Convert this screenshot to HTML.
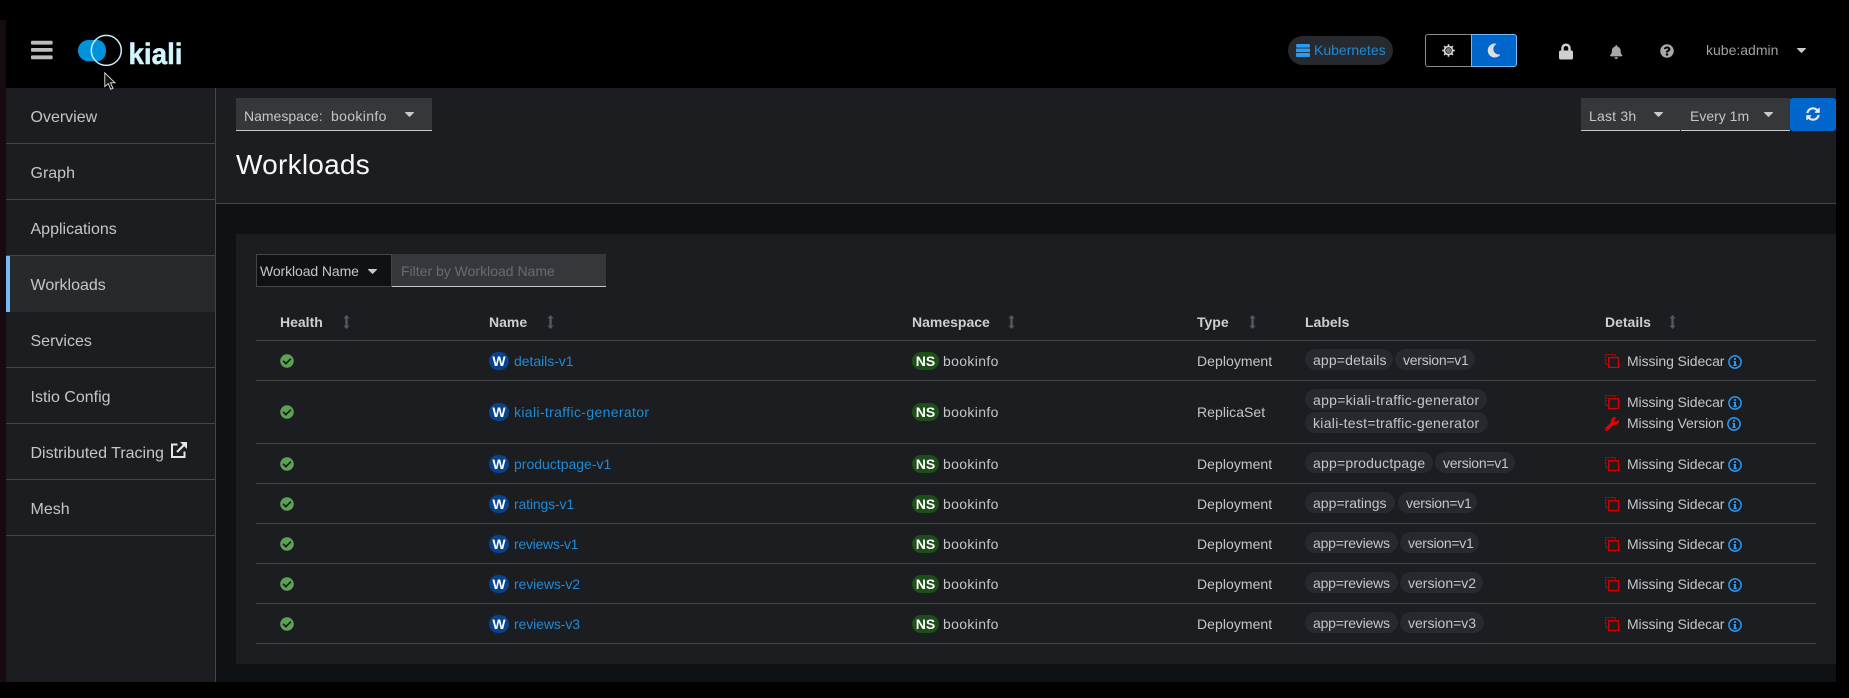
<!DOCTYPE html>
<html><head><meta charset="utf-8"><title>Workloads</title>
<style>
html,body{margin:0;padding:0;background:#000;}
body{position:relative;width:1849px;height:698px;overflow:hidden;font-family:"Liberation Sans",sans-serif;font-size:14px;color:#c6c6c6;}
.a{position:absolute;display:block;}
.t{position:absolute;line-height:20px;white-space:nowrap;}
.nav{position:absolute;left:30.500px;line-height:22px;font-size:16px;color:#c6c6c6;white-space:nowrap;}
.ln{position:absolute;left:6px;width:209px;height:1px;background:#444548;}
.hl{position:absolute;left:256px;width:1560px;height:1px;background:#444548;}
.th{position:absolute;top:312px;line-height:20px;font-weight:bold;color:#cfcfcf;}
.row{position:absolute;left:0;width:1849px;height:20px;}
.lk{color:#1f8ad6;left:514px;}
.b{position:absolute;top:1px;height:18px;line-height:18px;text-align:center;border-radius:9px;font-weight:bold;color:#fff;font-size:14px;}
.w{left:489px;width:20px;background:#06438a;}
.ns{left:912px;width:27px;background:#1e4f18;}
.bi{left:943px;letter-spacing:.35px;color:#c6c6c6;}
.ty{left:1197px;letter-spacing:.05px;color:#c6c6c6;}
.p{position:absolute;left:1305px;top:-2px;height:21px;line-height:23px;border-radius:11px;background:#26292d;color:#c6c6c6;white-space:nowrap;padding-left:8px;box-sizing:border-box;}
.dt{left:1627px;letter-spacing:-.1px;color:#c6c6c6;}
.sel{position:absolute;background:#36373b;border-bottom:1px solid #c7c7c7;box-sizing:border-box;}
svg{position:absolute;display:block;overflow:visible;}
</style></head><body>
<svg width="0" height="0" style="position:absolute">
<defs>
<symbol id="chk" viewBox="0 0 512 512"><path fill="#5ba352" d="M504 256c0 136.967-111.033 248-248 248S8 392.967 8 256 119.033 8 256 8s248 111.033 248 248zM227.314 387.314l184-184c6.248-6.248 6.248-16.379 0-22.627l-22.627-22.627c-6.248-6.249-16.379-6.249-22.628 0L216 308.118l-70.059-70.059c-6.248-6.248-16.379-6.248-22.628 0l-22.627 22.627c-6.248 6.248-6.248 16.379 0 22.627l104 104c6.249 6.249 16.379 6.249 22.628.001z"/></symbol>
<symbol id="sort" viewBox="0 0 7 14"><path fill="#55585c" d="M3.500 0 6.600 3.400H4.700V10.600H6.600L3.500 14 .4 10.600H2.300V3.400H.4Z"/></symbol>
<symbol id="car" viewBox="0 0 9 5"><path fill="#c9c9c9" d="M.6 0H8.400C8.900 0 9.100.5 8.800.9L4.900 4.700C4.700 4.900 4.300 4.900 4.100 4.700L.2.9C-.1.5.1 0 .6 0Z"/></symbol>
<symbol id="sc" viewBox="0 0 14 14"><path fill="none" stroke="#d00000" stroke-width="1.100" stroke-dasharray="2 1" d="M3 10.500H.6V.6H9.500L11 2.500"/><rect x="3.700" y="3.700" width="9.800" height="9.800" fill="none" stroke="#d80000" stroke-width="1.300"/></symbol>
<symbol id="inf" viewBox="0 0 14 14"><circle cx="7" cy="7" r="6.100" fill="none" stroke="#2b9af3" stroke-width="1.500"/><circle cx="7" cy="4" r="1.100" fill="#2b9af3"/><path fill="#2b9af3" d="M5.500 6H8V9.600H8.800V11H5.300V9.600H6.100V7.300H5.500Z"/></symbol>
<symbol id="wr" viewBox="0 0 512 512"><path fill="#ee0000" d="M507.730 109.100c-2.240-9.030-13.540-12.090-20.120-5.510l-74.360 74.360-67.880-11.310-11.310-67.880 74.360-74.360c6.620-6.620 3.430-17.900-5.660-20.160-47.380-11.740-99.550.91-136.580 37.930-39.640 39.640-50.550 97.100-34.050 147.200L18.740 402.760c-24.990 24.990-24.990 65.510 0 90.500 24.990 24.990 65.510 24.990 90.500 0l213.210-213.210c50.120 16.710 107.470 5.680 147.370-34.220 37.070-37.070 49.700-89.320 37.910-136.730zM64 472c-13.250 0-24-10.750-24-24 0-13.260 10.750-24 24-24s24 10.740 24 24c0 13.250-10.750 24-24 24z"/></symbol>
</defs></svg>

<!-- frame -->
<div class="a" style="left:0;top:20px;width:6px;height:662px;background:#170b12"></div>
<div class="a" style="left:6px;top:88px;width:209px;height:594px;background:#1b1d21"></div>
<div class="a" style="left:215px;top:88px;width:1px;height:594px;background:#444548"></div>
<div class="a" style="left:216px;top:88px;width:1620px;height:115px;background:#1b1d21"></div>
<div class="a" style="left:216px;top:203px;width:1620px;height:1px;background:#444548"></div>
<div class="a" style="left:216px;top:204px;width:1620px;height:478px;background:#0f1214"></div>
<div class="a" style="left:236px;top:234px;width:1600px;height:430px;background:#1b1d21"></div>

<!-- masthead -->
<svg style="left:31px;top:40px" width="22" height="20" viewBox="0 0 22 20"><g fill="#bcbcbc"><rect x="0" y=".8" width="21.600" height="3.800" rx="1"/><rect x="0" y="8" width="21.600" height="3.800" rx="1"/><rect x="0" y="15.400" width="21.600" height="3.800" rx="1"/></g></svg>
<svg style="left:76px;top:33px" width="110" height="36" viewBox="0 0 110 36">
<path fill="#0093dd" d="M12.500 7H22C27 7.800 30 12 30 17.600S27 27.400 22 28.300H12.500C6.600 28.300 2 23.500 2 17.600S6.600 7 12.500 7Z"/>
<circle cx="30.300" cy="17.400" r="15" fill="none" stroke="#c9eff5" stroke-width="1.500"/>
<text x="52.500" y="31" font-family="Liberation Sans" font-weight="bold" font-size="30" fill="#d2f5fc" stroke="#d2f5fc" stroke-width=".5" textLength="54" lengthAdjust="spacingAndGlyphs">kiali</text>
</svg>
<svg style="left:104px;top:72px" width="14" height="20" viewBox="0 0 14 20"><path fill="#151515" stroke="#e8e8e8" stroke-width=".9" d="M.8.8V14.600L4.200 11.600 6.700 17.300 9 16.300 6.500 10.800H11Z"/></svg>

<div class="a" style="left:1288px;top:36px;width:105px;height:29px;border-radius:15px;background:#26292d"></div>
<svg style="left:1296px;top:44px" width="14" height="13" viewBox="0 0 14 13"><g fill="#2b9af3"><rect width="14" height="3.600" rx="1.400"/><rect y="4.500" width="14" height="3.600" rx=".4"/><rect y="9" width="14" height="4" rx="1"/></g></svg>
<div class="t" style="left:1314px;top:40px;color:#1f8ad6;">Kubernetes</div>

<div class="a" style="left:1425px;top:34px;width:47px;height:33px;box-sizing:border-box;border:1px solid #8a8d90;border-right:0;border-radius:3px 0 0 3px;background:#000"></div>
<div class="a" style="left:1471px;top:34px;width:46px;height:33px;box-sizing:border-box;border:1px solid #73bcf7;border-radius:0 3px 3px 0;background:#0066cc"></div>
<svg style="left:1441.500px;top:43.500px" width="13" height="13" viewBox="0 0 14 14"><circle cx="7" cy="7" r="2.800" fill="#777"/><g fill="none" stroke="#dcdcdc"><circle cx="7" cy="7" r="4.300" stroke-width="1.700"/><path stroke-width="1.800" d="M7 .3V2.500M7 11.500V13.700M.3 7H2.500M11.500 7H13.700M2.300 2.300 3.800 3.800M10.200 10.200 11.700 11.700M11.700 2.300 10.200 3.800M3.800 10.200 2.300 11.700"/></g></svg>
<svg style="left:1487px;top:42.500px" width="14" height="15" viewBox="0 0 512 512"><path fill="#dedede" d="M283.211 512c78.962 0 151.079-35.925 198.857-94.792 7.068-8.708-.639-21.430-11.562-19.350-124.203 23.654-238.262-71.576-238.262-196.954 0-72.222 38.662-138.635 101.498-174.394 9.686-5.512 7.250-20.197-3.756-22.230A258.156 258.156 0 0 0 283.211 0c-141.309 0-256 114.511-256 256 0 141.309 114.511 256 256 256z"/></svg>
<svg style="left:1559px;top:43px" width="14" height="17" viewBox="0 0 448 512"><path fill="#cfcfcf" d="M400 224h-24v-72C376 68.200 307.800 0 224 0S72 68.200 72 152v72H48c-26.500 0-48 21.500-48 48v192c0 26.500 21.500 48 48 48h352c26.500 0 48-21.500 48-48V272c0-26.500-21.500-48-48-48zm-104 0H152v-72c0-39.700 32.300-72 72-72s72 32.300 72 72v72z"/></svg>
<svg style="left:1610px;top:45px" width="12.500" height="14" viewBox="0 0 448 512"><path fill="#a9a9a9" d="M224 512c35.320 0 63.970-28.650 63.970-64H160.030c0 35.350 28.650 64 63.970 64zm215.390-149.710c-19.320-20.760-55.470-51.990-55.470-154.290 0-77.700-54.480-139.900-127.940-155.160V32c0-17.670-14.320-32-31.980-32s-31.980 14.330-31.980 32v20.840C118.560 68.100 64.080 130.300 64.080 208c0 102.300-36.150 133.530-55.470 154.290-6 6.450-8.660 14.160-8.610 21.710.11 16.400 12.980 32 32.100 32h383.800c19.120 0 32-15.600 32.100-32 .05-7.550-2.610-15.270-8.610-21.710z"/></svg>
<svg style="left:1659.500px;top:43.500px" width="14" height="14" viewBox="0 0 512 512"><path fill="#a9a9a9" d="M504 256c0 136.997-111.043 248-248 248S8 392.997 8 256C8 119.083 119.043 8 256 8s248 111.083 248 248zM262.655 90c-54.497 0-89.255 22.957-116.549 63.758-3.536 5.286-2.353 12.415 2.715 16.258l34.699 26.310c5.205 3.947 12.621 3.008 16.665-2.122 17.864-22.658 30.113-35.797 57.303-35.797 20.429 0 45.698 13.148 45.698 32.958 0 14.976-12.363 22.667-32.534 33.976C247.128 238.528 216 254.941 216 296v4c0 6.627 5.373 12 12 12h56c6.627 0 12-5.373 12-12v-1.333c0-28.462 83.186-29.647 83.186-106.667 0-58.002-60.165-102-116.531-102zM256 338c-25.365 0-46 20.635-46 46 0 25.364 20.635 46 46 46s46-20.636 46-46c0-25.365-20.635-46-46-46z"/></svg>
<div class="t" style="left:1706px;top:40px;color:#a0a0a0;">kube:admin</div>
<svg style="left:1797px;top:48px" width="9" height="5"><use href="#car"/></svg>

<!-- sidebar -->
<div class="a" style="left:6px;top:255px;width:209px;height:57px;background:#27292d"></div>
<div class="a" style="left:6px;top:255px;width:4px;height:57px;background:#73bcf7"></div>
<div class="ln" style="top:143px"></div><div class="ln" style="top:199px"></div><div class="ln" style="top:255px"></div>
<div class="ln" style="top:367px"></div><div class="ln" style="top:423px"></div><div class="ln" style="top:479px"></div><div class="ln" style="top:535px"></div>
<div class="nav" style="top:107px">Overview</div>
<div class="nav" style="top:163px">Graph</div>
<div class="nav" style="top:219px">Applications</div>
<div class="nav" style="top:275px">Workloads</div>
<div class="nav" style="top:331px">Services</div>
<div class="nav" style="top:387px">Istio Config</div>
<div class="nav" style="top:443px">Distributed Tracing</div>
<div class="nav" style="top:499px">Mesh</div>
<svg style="left:171px;top:442px" width="16" height="16" viewBox="0 0 16 16"><path fill="none" stroke="#e6e6e6" stroke-width="2" d="M6.500 2.500H1V15H13.500V9.500"/><path fill="none" stroke="#e6e6e6" stroke-width="2.200" d="M6 10 13.500 2.500"/><path fill="#e6e6e6" d="M9 0H16V7Z"/></svg>

<!-- page head -->
<div class="sel" style="left:236px;top:98px;width:196px;height:33px"></div>
<div class="t" style="left:244px;top:106px;color:#c6c6c6;">Namespace:</div>
<div class="t" style="left:331px;top:106px;color:#c6c6c6;letter-spacing:.35px;">bookinfo</div>
<svg style="left:404.500px;top:112px" width="9" height="5"><use href="#car"/></svg>
<div class="t" style="left:236px;top:148px;font-size:28px;line-height:34px;color:#f8f8f8;letter-spacing:.25px;">Workloads</div>

<div class="sel" style="left:1581px;top:98px;width:99px;height:33px"></div>
<div class="sel" style="left:1681px;top:98px;width:109px;height:33px"></div>
<div class="a" style="left:1680px;top:98px;width:1px;height:32px;background:#36373b"></div>
<div class="t" style="left:1589px;top:106px;color:#c6c6c6;letter-spacing:.2px;">Last 3h</div>
<svg style="left:1654px;top:112px" width="9" height="5"><use href="#car"/></svg>
<div class="t" style="left:1690px;top:106px;color:#c6c6c6;">Every 1m</div>
<svg style="left:1763.500px;top:112px" width="9" height="5"><use href="#car"/></svg>
<div class="a" style="left:1790px;top:98px;width:46px;height:33px;background:#0066cc;border-radius:3px"></div>
<svg style="left:1806px;top:107px" width="14" height="14" viewBox="0 0 512 512"><path fill="#e8e8e8" d="M370.720 133.280C339.458 104.008 298.888 87.962 255.848 88c-77.458.068-144.328 53.178-162.791 126.850-1.344 5.363-6.122 9.150-11.651 9.150H24.103c-7.498 0-13.194-6.807-11.807-14.176C33.933 94.924 134.813 8 256 8c66.448 0 126.791 26.136 171.315 68.685L463.030 40.970C478.149 25.851 504 36.559 504 57.941V192c0 13.255-10.745 24-24 24H345.941c-21.382 0-32.090-25.851-16.971-40.971l41.750-41.749zM32 296h134.059c21.382 0 32.090 25.851 16.971 40.971l-41.750 41.750c31.262 29.273 71.835 45.319 114.876 45.280 77.418-.07 144.315-53.144 162.787-126.849 1.344-5.363 6.122-9.150 11.651-9.150h57.304c7.498 0 13.194 6.807 11.807 14.176C478.067 417.076 377.187 504 256 504c-66.448 0-126.791-26.136-171.315-68.685L48.970 471.030C33.851 486.149 8 475.441 8 454.059V320c0-13.255 10.745-24 24-24z"/></svg>

<!-- filter -->
<div class="a" style="left:256px;top:254px;width:136px;height:33px;box-sizing:border-box;background:#0f1214;border:1px solid #444548"></div>
<div class="t" style="left:260px;top:261px;color:#c6c6c6;letter-spacing:-.1px;">Workload Name</div>
<svg style="left:368px;top:269px" width="9" height="5"><use href="#car"/></svg>
<div class="sel" style="left:392px;top:254px;width:214px;height:33px"></div>
<div class="t" style="left:401px;top:261px;color:#686c71;">Filter by Workload Name</div>

<!-- table -->
<div class="th" style="left:280px">Health</div><svg style="left:343px;top:315px" width="7" height="14"><use href="#sort"/></svg>
<div class="th" style="left:489px">Name</div><svg style="left:547px;top:315px" width="7" height="14"><use href="#sort"/></svg>
<div class="th" style="left:912px">Namespace</div><svg style="left:1007.500px;top:315px" width="7" height="14"><use href="#sort"/></svg>
<div class="th" style="left:1197px">Type</div><svg style="left:1248.500px;top:315px" width="7" height="14"><use href="#sort"/></svg>
<div class="th" style="left:1305px">Labels</div>
<div class="th" style="left:1605px">Details</div><svg style="left:1669px;top:315px" width="7" height="14"><use href="#sort"/></svg>

<div class="hl" style="top:340px"></div><div class="hl" style="top:380px"></div><div class="hl" style="top:443px"></div><div class="hl" style="top:483px"></div><div class="hl" style="top:523px"></div><div class="hl" style="top:563px"></div><div class="hl" style="top:603px"></div><div class="hl" style="top:643px"></div>

<div class="row" style="top:351px">
<svg style="left:280px;top:3px" width="14" height="14"><use href="#chk"/></svg><span class="b w">W</span><span class="t lk" style="letter-spacing:-.04px">details-v1</span><span class="b ns">NS</span><span class="t bi">bookinfo</span><span class="t ty">Deployment</span>
<span class="p" style="width:88px;letter-spacing:.15px">app=details</span><span class="p" style="left:1395px;width:80px;letter-spacing:-.25px">version=v1</span>
<svg style="left:1605px;top:3px" width="14" height="14"><use href="#sc"/></svg><span class="t dt">Missing Sidecar</span><svg style="left:1728px;top:4px" width="14" height="14"><use href="#inf"/></svg>
</div>

<div class="row" style="top:402px">
<svg style="left:280px;top:3px" width="14" height="14"><use href="#chk"/></svg><span class="b w">W</span><span class="t lk" style="letter-spacing:.35px">kiali-traffic-generator</span><span class="b ns">NS</span><span class="t bi">bookinfo</span><span class="t ty">ReplicaSet</span>
<span class="p" style="top:-13px;width:182px;letter-spacing:.28px">app=kiali-traffic-generator</span><span class="p" style="top:10px;width:183px;letter-spacing:.3px">kiali-test=traffic-generator</span>
<svg style="left:1605px;top:-7px" width="14" height="14"><use href="#sc"/></svg><span class="t dt" style="top:-10px">Missing Sidecar</span><svg style="left:1728px;top:-6px" width="14" height="14"><use href="#inf"/></svg>
<svg style="left:1605px;top:14.500px" width="14" height="14"><use href="#wr"/></svg><span class="t dt" style="top:11px">Missing Version</span><svg style="left:1727px;top:15px" width="14" height="14"><use href="#inf"/></svg>
</div>

<div class="row" style="top:454px">
<svg style="left:280px;top:3px" width="14" height="14"><use href="#chk"/></svg><span class="b w">W</span><span class="t lk">productpage-v1</span><span class="b ns">NS</span><span class="t bi">bookinfo</span><span class="t ty">Deployment</span>
<span class="p" style="width:128px;letter-spacing:.2px">app=productpage</span><span class="p" style="left:1435px;width:80px;letter-spacing:-.25px">version=v1</span>
<svg style="left:1605px;top:3px" width="14" height="14"><use href="#sc"/></svg><span class="t dt">Missing Sidecar</span><svg style="left:1728px;top:4px" width="14" height="14"><use href="#inf"/></svg>
</div>

<div class="row" style="top:494px">
<svg style="left:280px;top:3px" width="14" height="14"><use href="#chk"/></svg><span class="b w">W</span><span class="t lk" style="letter-spacing:-.15px">ratings-v1</span><span class="b ns">NS</span><span class="t bi">bookinfo</span><span class="t ty">Deployment</span>
<span class="p" style="width:90px">app=ratings</span><span class="p" style="left:1398px;width:79px;letter-spacing:-.25px">version=v1</span>
<svg style="left:1605px;top:3px" width="14" height="14"><use href="#sc"/></svg><span class="t dt">Missing Sidecar</span><svg style="left:1728px;top:4px" width="14" height="14"><use href="#inf"/></svg>
</div>

<div class="row" style="top:534px">
<svg style="left:280px;top:3px" width="14" height="14"><use href="#chk"/></svg><span class="b w">W</span><span class="t lk" style="letter-spacing:-.27px">reviews-v1</span><span class="b ns">NS</span><span class="t bi">bookinfo</span><span class="t ty">Deployment</span>
<span class="p" style="width:93px;letter-spacing:-.2px">app=reviews</span><span class="p" style="left:1400px;width:79px;letter-spacing:-.25px">version=v1</span>
<svg style="left:1605px;top:3px" width="14" height="14"><use href="#sc"/></svg><span class="t dt">Missing Sidecar</span><svg style="left:1728px;top:4px" width="14" height="14"><use href="#inf"/></svg>
</div>

<div class="row" style="top:574px">
<svg style="left:280px;top:3px" width="14" height="14"><use href="#chk"/></svg><span class="b w">W</span><span class="t lk" style="letter-spacing:-.1px">reviews-v2</span><span class="b ns">NS</span><span class="t bi">bookinfo</span><span class="t ty">Deployment</span>
<span class="p" style="width:93px;letter-spacing:-.2px">app=reviews</span><span class="p" style="left:1400px;width:83px">version=v2</span>
<svg style="left:1605px;top:3px" width="14" height="14"><use href="#sc"/></svg><span class="t dt">Missing Sidecar</span><svg style="left:1728px;top:4px" width="14" height="14"><use href="#inf"/></svg>
</div>

<div class="row" style="top:614px">
<svg style="left:280px;top:3px" width="14" height="14"><use href="#chk"/></svg><span class="b w">W</span><span class="t lk" style="letter-spacing:-.1px">reviews-v3</span><span class="b ns">NS</span><span class="t bi">bookinfo</span><span class="t ty">Deployment</span>
<span class="p" style="width:93px;letter-spacing:-.2px">app=reviews</span><span class="p" style="left:1400px;width:84px">version=v3</span>
<svg style="left:1605px;top:3px" width="14" height="14"><use href="#sc"/></svg><span class="t dt">Missing Sidecar</span><svg style="left:1728px;top:4px" width="14" height="14"><use href="#inf"/></svg>
</div>
</body></html>
